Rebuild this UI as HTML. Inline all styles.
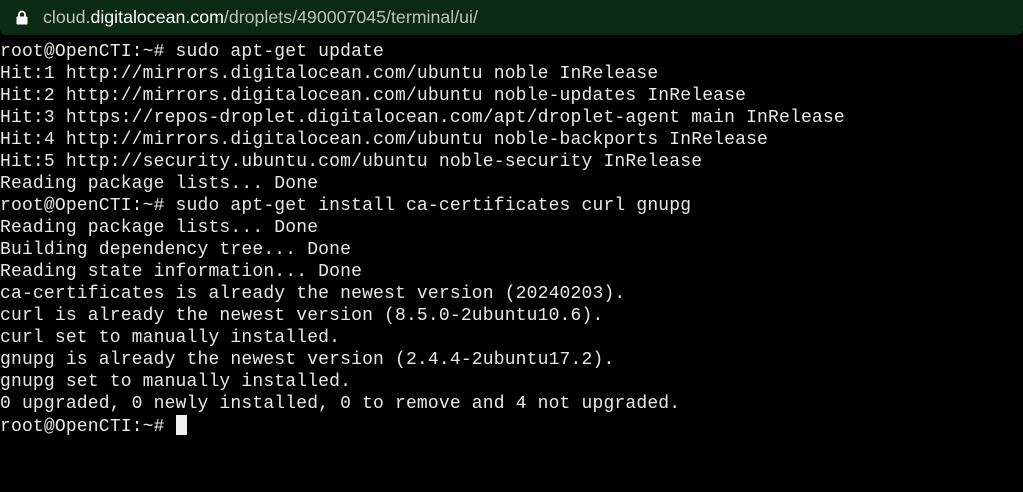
<!DOCTYPE html>
<html><head><style>
html,body{margin:0;padding:0;width:1023px;height:492px;background:#000;overflow:hidden}
.bar{position:absolute;left:0;top:0;width:1023px;height:35px;background:#0b2a14;border-radius:0 0 6px 6px}
.url{position:absolute;left:43px;top:7px;font:17.8px "Liberation Sans",sans-serif;color:#b9c4bb;white-space:pre}
.url b{font-weight:normal;color:#fff}
.lock{position:absolute;left:16px;top:10px}
pre{position:absolute;left:0;top:41px;margin:0;font:18px/22px "Liberation Mono",monospace;letter-spacing:0.17px;color:#e8e8e8}
.cur{display:inline-block;width:11px;height:20px;background:#f0f0f0;vertical-align:-4px}
</style></head><body>
<div class="bar"><svg class="lock" width="12" height="15" viewBox="0 0 12 15"><path d="M3 7V4.5a3 3 0 0 1 6 0V7" fill="none" stroke="#fff" stroke-width="1.8"/><rect x="0.5" y="6.5" width="11" height="8" rx="1" fill="#fff"/></svg><div class="url">cloud.<b>digitalocean.com</b>/droplets/490007045/terminal/ui/</div></div>
<pre>root@OpenCTI:~# sudo apt-get update
Hit:1 http://mirrors.digitalocean.com/ubuntu noble InRelease
Hit:2 http://mirrors.digitalocean.com/ubuntu noble-updates InRelease
Hit:3 https://repos-droplet.digitalocean.com/apt/droplet-agent main InRelease
Hit:4 http://mirrors.digitalocean.com/ubuntu noble-backports InRelease
Hit:5 http://security.ubuntu.com/ubuntu noble-security InRelease
Reading package lists... Done
root@OpenCTI:~# sudo apt-get install ca-certificates curl gnupg
Reading package lists... Done
Building dependency tree... Done
Reading state information... Done
ca-certificates is already the newest version (20240203).
curl is already the newest version (8.5.0-2ubuntu10.6).
curl set to manually installed.
gnupg is already the newest version (2.4.4-2ubuntu17.2).
gnupg set to manually installed.
0 upgraded, 0 newly installed, 0 to remove and 4 not upgraded.
root@OpenCTI:~# <span class="cur"></span></pre>
</body></html>
